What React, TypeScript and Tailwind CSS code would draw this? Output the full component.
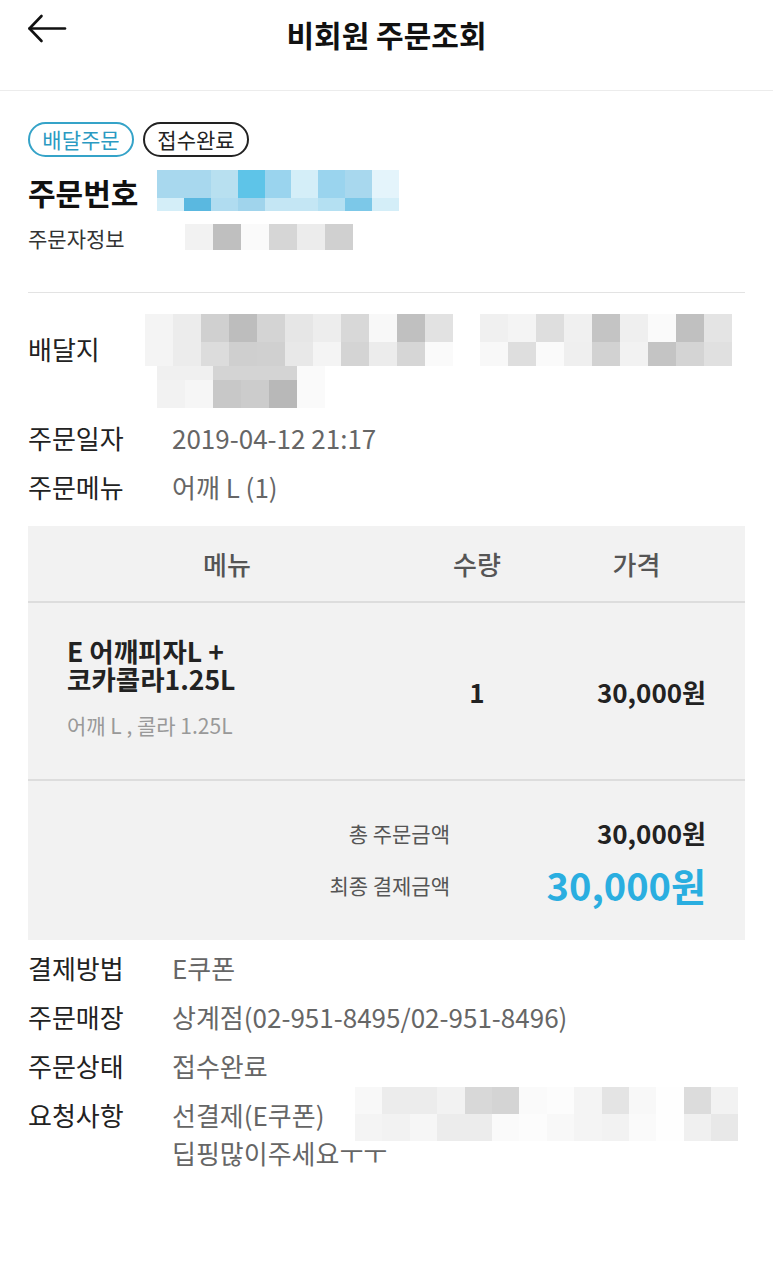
import React from "react";

const FONT = "font-['Noto_Sans_CJK_KR','Noto_Sans',sans-serif]";

// blurred (mosaic) blocks as in the source capture
const orderNoTop = ["bg-[#a8d8ee]", "bg-[#a8d8ee]", "bg-[#b8e0f0]", "bg-[#5ec4e8]", "bg-[#9ad4ee]", "bg-[#d4eef8]", "bg-[#9ad4ee]", "bg-[#a8d8ee]", "bg-[#e4f4fb]"];
const orderNoBottom = ["bg-[#d4eef8]", "bg-[#5ab8e0]", "bg-[#b0dcf0]", "bg-[#a0d4ec]", "bg-[#c4e6f4]", "bg-[#c4e6f4]", "bg-[#b4e0f2]", "bg-[#7cc8e8]", "bg-[#d4eef8]"];
const ordererRow = ["bg-[#f2f2f2]", "bg-[#bfbfbf]", "bg-[#fafafa]", "bg-[#d6d6d6]", "bg-[#ececec]", "bg-[#d0d0d0]"];

const addrA1 = ["bg-[#f4f4f4]", "bg-[#ececec]", "bg-[#d0d0d0]", "bg-[#bdbdbd]", "bg-[#d4d4d4]", "bg-[#e6e6e6]", "bg-[#ededed]", "bg-[#d8d8d8]", "bg-[#f8f8f8]", "bg-[#c0c0c0]", "bg-[#e2e2e2]"];
const addrA2 = ["bg-[#f4f4f4]", "bg-[#ececec]", "bg-[#dcdcdc]", "bg-[#cfcfcf]", "bg-[#d0d0d0]", "bg-[#e8e8e8]", "bg-[#f4f4f4]", "bg-[#d4d4d4]", "bg-[#ececec]", "bg-[#d6d6d6]", "bg-[#fafafa]"];
const addrB1 = ["bg-[#f0f0f0]", "bg-[#f4f4f4]", "bg-[#dedede]", "bg-[#f0f0f0]", "bg-[#c4c4c4]", "bg-[#efefef]", "bg-[#fafafa]", "bg-[#c0c0c0]", "bg-[#e4e4e4]"];
const addrB2 = ["bg-[#f8f8f8]", "bg-[#dedede]", "bg-[#fafafa]", "bg-[#efefef]", "bg-[#d2d2d2]", "bg-[#f2f2f2]", "bg-[#c4c4c4]", "bg-[#d4d4d4]", "bg-[#e0e0e0]"];
const addrC1 = ["bg-[#f0f0f0]", "bg-[#f0f0f0]", "bg-[#d4d4d4]", "bg-[#d4d4d4]", "bg-[#d4d4d4]", "bg-[#fafafa]"];
const addrC2 = ["bg-[#f2f2f2]", "bg-[#f6f6f6]", "bg-[#c8c8c8]", "bg-[#cccccc]", "bg-[#b8b8b8]", "bg-[#fafafa]"];

const reqRow1 = ["bg-[#f8f8f8]", "bg-[#ececec]", "bg-[#ececec]", "bg-[#f2f2f2]", "bg-[#d8d8d8]", "bg-[#d4d4d4]", "bg-[#fafafa]", "bg-[#fcfcfc]", "bg-[#f4f4f4]", "bg-[#e4e4e4]", "bg-[#f8f8f8]", "bg-[#fefefe]", "bg-[#dcdcdc]", "bg-[#f2f2f2]"];
const reqRow2 = ["bg-[#f4f4f4]", "bg-[#f2f2f2]", "bg-[#f6f6f6]", "bg-[#ececec]", "bg-[#ececec]", "bg-[#fafafa]", "bg-[#fcfcfc]", "bg-[#f8f8f8]", "bg-[#f4f4f4]", "bg-[#f2f2f2]", "bg-[#fafafa]", "bg-[#fefefe]", "bg-[#f0f0f0]", "bg-[#e8e8e8]"];

const MosaicRow = ({ cells, h, w = "w-[28px]" }: { cells: string[]; h: string; w?: string }) => (
  <div className={`flex ${h}`}>
    {cells.map((c, i) => (
      <div key={i} className={`${w} shrink-0 ${c}`} />
    ))}
  </div>
);

const BackArrow = () => (
  <svg width="40" height="29" viewBox="0 0 40 29" fill="none" stroke="#111" strokeWidth="2.6" strokeLinecap="round" strokeLinejoin="round">
    <path d="M38 14.5H2.5" />
    <path d="M14.5 2L2.5 14.5L14.5 27" />
  </svg>
);

const InfoRow = ({ label, children }: { label: string; children: React.ReactNode }) => (
  <div className="flex text-[26px] leading-[38px]">
    <span className="w-[144px] shrink-0 text-[#222]">{label}</span>
    <div className="text-[#666]">{children}</div>
  </div>
);

export default function App() {
  return (
    <div className={`${FONT} w-[773px] min-h-[1281px] bg-white text-[#222]`}>
      {/* header */}
      <header className="relative h-[91px] border-b border-[#ececec]">
        <button className="absolute left-[27px] top-[14px]">
          <BackArrow />
        </button>
        <h1 className="pt-[12px] text-center text-[30px] font-bold leading-[44px] text-[#111]">
          비회원 주문조회
        </h1>
      </header>

      <main className="px-[28px]">
        {/* status badges */}
        <div className="mt-[31px] flex gap-[9px]">
          <span className="h-[35px] w-[106px] rounded-full border-2 border-[#35a3c8] text-center text-[21px] leading-[31px] text-[#2b9ac2]">
            배달주문
          </span>
          <span className="h-[35px] w-[106px] rounded-full border-2 border-[#222] text-center text-[21px] leading-[31px] text-[#222]">
            접수완료
          </span>
        </div>

        <div className="mt-[13px] flex h-[41px]">
          <span className="mt-[2px] text-[30px] font-bold leading-[41px] text-[#111]">주문번호</span>
          <div className="ml-[19px]">
            <MosaicRow cells={orderNoTop} h="h-[28px]" w="w-[26.8px]" />
            <MosaicRow cells={orderNoBottom} h="h-[13px]" w="w-[26.8px]" />
          </div>
        </div>

        <div className="mt-[13px] flex h-[26px]">
          <span className="text-[21px] leading-[28px] text-[#333]">주문자정보</span>
          <div className="ml-[60px]">
            <MosaicRow cells={ordererRow} h="h-[26px]" />
          </div>
        </div>

        <div className="mt-[42px] h-px bg-[#e3e3e3]" />

        {/* delivery address */}
        <div className="mt-[21px] flex">
          <span className="mt-[16px] w-[117px] shrink-0 text-[26px] leading-[38px]">배달지</span>
          <div>
            <div className="flex gap-[27px]">
              <div>
                <MosaicRow cells={addrA1} h="h-[28px]" />
                <MosaicRow cells={addrA2} h="h-[24px]" />
              </div>
              <div>
                <MosaicRow cells={addrB1} h="h-[28px]" />
                <MosaicRow cells={addrB2} h="h-[24px]" />
              </div>
            </div>
            <div className="ml-[12px]">
              <MosaicRow cells={addrC1} h="h-[14px]" />
              <MosaicRow cells={addrC2} h="h-[28px]" />
            </div>
          </div>
        </div>

        <div className="mt-[11px] flex flex-col gap-[11px]">
          <InfoRow label="주문일자">2019-04-12 21:17</InfoRow>
          <InfoRow label="주문메뉴">어깨 L (1)</InfoRow>
        </div>

        {/* order table */}
        <div className="mt-[20px] bg-[#f2f2f2]">
          <div className="grid h-[77px] grid-cols-[398px_102px_1fr] items-center border-b-2 border-[#dddddd] text-[26px] font-medium text-[#555]">
            <span className="text-center">메뉴</span>
            <span className="text-center">수량</span>
            <span className="text-center">가격</span>
          </div>

          <div className="grid h-[178px] grid-cols-[398px_102px_1fr] items-center border-b-2 border-[#dddddd]">
            <div className="pb-[8px] pl-[39px]">
              <p className="text-[26.5px] font-bold leading-[28px] text-[#222]">
                E 어깨피자L +
                <br />
                코카콜라1.25L
              </p>
              <p className="mt-[19px] text-[21px] leading-[26px] text-[#999]">어깨 L , 콜라 1.25L</p>
            </div>
            <span className="text-center text-[26px] font-bold text-[#222]">1</span>
            <span className="pr-[39px] text-right text-[26px] font-bold text-[#222]">30,000원</span>
          </div>

          <div className="grid h-[159px] grid-cols-[422px_1fr] content-center items-center gap-y-[4px]">
            <span className="text-right text-[21px] leading-[44px] text-[#555]">총 주문금액</span>
            <span className="pr-[39px] text-right text-[26px] font-bold leading-[44px] text-[#222]">30,000원</span>
            <span className="text-right text-[21px] leading-[52px] text-[#555]">최종 결제금액</span>
            <span className="pr-[39px] text-right text-[38px] font-bold leading-[52px] text-[#2aaee0]">30,000원</span>
          </div>
        </div>

        {/* payment info */}
        <div className="mt-[9px] flex flex-col gap-[11px]">
          <InfoRow label="결제방법">E쿠폰</InfoRow>
          <InfoRow label="주문매장">상계점(02-951-8495/02-951-8496)</InfoRow>
          <InfoRow label="주문상태">접수완료</InfoRow>
          <InfoRow label="요청사항">
            <div className="relative">
              선결제(E쿠폰)
              <br />
              딥핑많이주세요ㅜㅜ
              <div className="absolute left-[183px] top-[-9px]">
                <MosaicRow cells={reqRow1} h="h-[27px]" w="w-[27.4px]" />
                <MosaicRow cells={reqRow2} h="h-[27px]" w="w-[27.4px]" />
              </div>
            </div>
          </InfoRow>
        </div>
      </main>
    </div>
  );
}
